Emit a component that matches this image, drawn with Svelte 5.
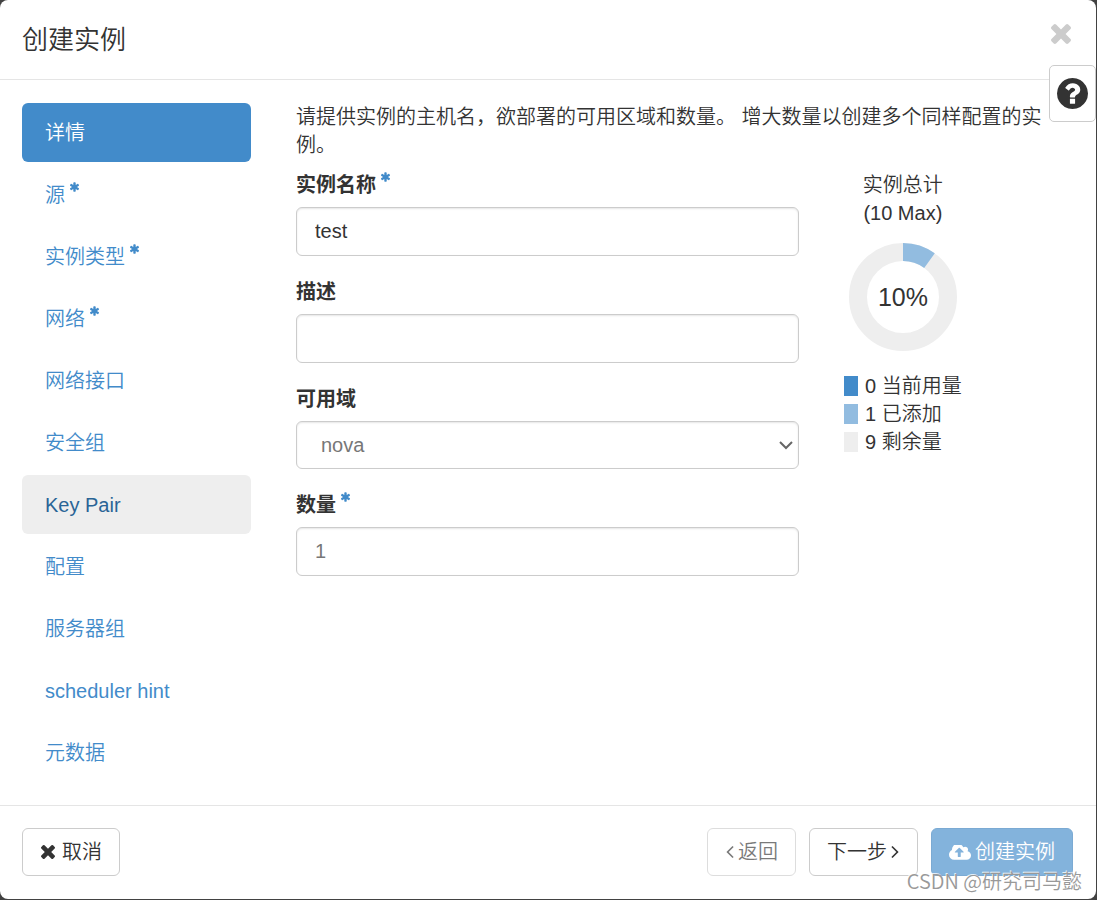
<script>
  const steps = [
    { label: '详情', state: 'active' },
    { label: '源', required: true },
    { label: '实例类型', required: true },
    { label: '网络', required: true },
    { label: '网络接口' },
    { label: '安全组' },
    { label: 'Key Pair', state: 'hover' },
    { label: '配置' },
    { label: '服务器组' },
    { label: 'scheduler hint' },
    { label: '元数据' }
  ];

  const legend = [
    { count: 0, label: '当前用量', kind: 'used' },
    { count: 1, label: '已添加', kind: 'added' },
    { count: 9, label: '剩余量', kind: 'left' }
  ];

  let name = $state('test');
  let description = $state('');
  let zone = $state('nova');
  let quantity = $state(1);

  const ring = 2 * Math.PI * 45;
  const timesPath =
    'M1490 1322q0 40-28 68l-136 136q-28 28-68 28t-68-28l-294-294-294 294q-28 28-68 28t-68-28l-136-136q-28-28-28-68t28-68l294-294-294-294q-28-28-28-68t28-68l136-136q28-28 68-28t68 28l294 294 294-294q28-28 68-28t68 28l136 136q28 28 28 68t-28 68l-294 294 294 294q28 28 28 68z';
</script>

{#snippet star()}
  <svg class="star" viewBox="180 128 1432 1536" aria-hidden="true">
    <path d="M1546 1050q46 26 59.5 77.5t-12.5 97.5l-64 110q-26 46-77.5 59.5t-97.5-12.5l-266-153v307q0 52-38 90t-90 38h-128q-52 0-90-38t-38-90v-307l-266 153q-46 26-97.5 12.5t-77.5-59.5l-64-110q-26-46-12.5-97.5t59.5-77.5l266-154-266-154q-46-26-59.5-77.5t12.5-97.5l64-110q26-46 77.5-59.5t97.5 12.5l266 153v-307q0-52 38-90t90-38h128q52 0 90 38t38 90v307l266-153q46-26 97.5-12.5t77.5 59.5l64 110q26 46 12.5 97.5t-59.5 77.5l-266 154z" />
  </svg>
{/snippet}

{#snippet times()}
  <svg class="times" viewBox="302 366 1188 1188" aria-hidden="true"><path d={timesPath} /></svg>
{/snippet}

<div class="modal" role="dialog" aria-labelledby="modal-title">
  <header>
    <h1 id="modal-title">创建实例</h1>
    <button class="close" type="button" aria-label="关闭">{@render times()}</button>
  </header>

  <button class="help" type="button" aria-label="帮助">
    <svg viewBox="128 128 1536 1536" aria-hidden="true">
      <path d="M1024 1376v-192q0-14-9-23t-23-9h-192q-14 0-23 9t-9 23v192q0 14 9 23t23 9h192q14 0 23-9t9-23zm256-672q0-88-55.5-163t-138.5-116-170-41q-243 0-371 213-15 24 8 42l132 100q7 6 19 6 16 0 25-12 53-68 86-92 34-24 86-24 48 0 85.5 26t37.5 59q0 38-20 61t-68 45q-63 28-115.5 86.5t-52.5 125.5v36q0 14 9 23t23 9h192q14 0 23-9t9-23q0-19 21.5-49.5t54.5-49.5q32-18 49-28.5t46-35 44.5-48 28-60.5 12.5-81zm384 192q0 209-103 385.5t-279.5 279.5-385.5 103-385.5-103-279.5-279.5-103-385.5 103-385.5 279.5-279.5 385.5-103 385.5 103 279.5 279.5 103 385.5z" />
    </svg>
  </button>

  <div class="body">
    <nav>
      {#each steps as step}
        <a href="#step" class={step.state}>
          <span>{step.label}</span>{#if step.required}{@render star()}{/if}
        </a>
      {/each}
    </nav>

    <main>
      <p>请提供实例的主机名，欲部署的可用区域和数量。 增大数量以创建多个同样配置的实例。</p>
      <div class="columns">
        <form id="launch">
          <div class="field">
            <label for="name">实例名称{@render star()}</label>
            <input id="name" type="text" bind:value={name} />
          </div>
          <div class="field">
            <label for="description">描述</label>
            <input id="description" type="text" bind:value={description} />
          </div>
          <div class="field">
            <label for="zone">可用域</label>
            <select id="zone" bind:value={zone}>
              <option value="nova">nova</option>
            </select>
          </div>
          <div class="field">
            <label for="quantity">数量{@render star()}</label>
            <input id="quantity" class="muted" type="number" min="1" bind:value={quantity} />
          </div>
        </form>

        <section class="quota">
          <div class="caption">实例总计<br />(10 Max)</div>
          <svg class="donut" viewBox="0 0 108 108" role="img" aria-label="10%">
            <circle class="track" cx="54" cy="54" r="45" />
            <circle
              class="slice"
              cx="54"
              cy="54"
              r="45"
              stroke-dasharray="{ring * 0.1} {ring}"
              transform="rotate(-90 54 54)"
            />
            <text x="54" y="63" text-anchor="middle">10%</text>
          </svg>
          <ul>
            {#each legend as row}
              <li><i class={row.kind}></i><span>{row.count} {row.label}</span></li>
            {/each}
          </ul>
        </section>
      </div>
    </main>
  </div>

  <footer>
    <button class="btn cancel" type="button">{@render times()}取消</button>
    <button class="btn" type="button" disabled>
      <svg class="angle" viewBox="589 460 640 1000" aria-hidden="true">
        <path d="M1203 544q0 13-10 23l-393 393 393 393q10 10 10 23t-10 23l-50 50q-10 10-23 10t-23-10l-466-466q-10-10-10-23t10-23l466-466q10-10 23-10t23 10l50 50q10 10 10 23z" />
      </svg>返回
    </button>
    <button class="btn" type="button">
      下一步<svg class="angle" viewBox="560 460 640 1000" aria-hidden="true">
        <path d="M1171 960q0 13-10 23l-466 466q-10 10-23 10t-23-10l-50-50q-10-10-10-23t10-23l393-393-393-393q-10-10-10-23t10-23l50-50q10-10 23-10t23 10l466 466q10 10 10 23z" />
      </svg>
    </button>
    <button class="btn primary" type="submit" form="launch" disabled>
      <svg class="cloud" viewBox="-64 256 1920 1280" aria-hidden="true">
        <path d="M1216 864q0-14-9-23l-352-352q-9-9-23-9t-23 9l-351 351q-10 12-10 24 0 14 9 23t23 9h224v352q0 13 9.5 22.5t22.5 9.5h192q13 0 22.5-9.5t9.5-22.5v-352h224q13 0 22.5-9.5t9.5-22.5zm640 288q0 159-112.5 271.5t-271.5 112.5h-1088q-185 0-316.5-131.5t-131.5-316.5q0-130 70-240t188-165q-2-30-2-43 0-212 150-362t362-150q156 0 285.5 87t188.5 231q71-62 166-62 106 0 181 75t75 181q0 76-41 138 130 31 213.5 135.5t83.5 238.5z" />
      </svg>创建实例
    </button>
  </footer>
  <div class="mark">CSDN @研究司马懿</div>
</div>

<style>
  :global(body) {
    margin: 0;
    background: #424242;
  }
  .modal,
  .modal :global(*) {
    box-sizing: border-box;
  }
  .modal {
    position: relative;
    margin: 0 1px 1px 0;
    background: #fff;
    border-radius: 8px;
    color: #333;
    font: 350 20px/28px 'Liberation Sans', 'Noto Sans CJK SC', sans-serif;
  }
  button,
  input,
  select {
    font: inherit;
    color: inherit;
  }
  svg {
    fill: currentColor;
    flex: none;
  }
  header {
    display: flex;
    justify-content: space-between;
    align-items: flex-start;
    padding: 22px 25px 21px 22px;
    border-bottom: 1px solid #e5e5e5;
  }
  h1 {
    margin: 0;
    font-size: 26px;
    font-weight: inherit;
    line-height: 36px;
  }
  .close {
    display: flex;
    margin: 2px 0 0;
    padding: 0;
    border: 0;
    background: none;
    color: #ccc;
  }
  .close .times {
    width: 20px;
    height: 20px;
  }
  .help {
    position: absolute;
    top: 65px;
    right: 0;
    display: flex;
    padding: 12px 7px;
    background: #fff;
    border: 1px solid #ccc;
    border-radius: 5px;
  }
  .help svg {
    width: 31px;
    height: 31px;
  }
  .body {
    display: grid;
    grid-template-columns: 229fr 778fr;
    gap: 45px;
    padding: 23px 22px;
  }
  nav {
    display: flex;
    flex-direction: column;
    gap: 3px;
  }
  nav a {
    display: flex;
    align-items: center;
    height: 59px;
    padding: 0 23px;
    border-radius: 6px;
    color: #428bca;
    text-decoration: none;
  }
  nav a.active {
    background: #428bca;
    color: #fff;
  }
  nav a.hover {
    background: #eee;
    color: #2a6496;
  }
  .star {
    width: 9px;
    height: 10px;
    margin: 0 0 16px 5px;
    color: #428bca;
  }
  p {
    margin: 0 22px 12px 0;
  }
  .columns {
    display: grid;
    grid-template-columns: 503fr 230fr;
    gap: 45px;
  }
  form {
    display: flex;
    flex-direction: column;
    gap: 22px;
  }
  .field {
    display: flex;
    flex-direction: column;
    gap: 8px;
  }
  label {
    display: flex;
    align-items: center;
    font-weight: 700;
  }
  input,
  select {
    width: 100%;
    height: 49px;
    margin: 0;
    padding: 0 18px;
    background: #fff;
    border: 1px solid #ccc;
    border-radius: 6px;
    box-shadow: inset 0 1px 2px rgba(0, 0, 0, 0.1);
    appearance: none;
  }
  input[type='number'] {
    appearance: textfield;
  }
  .muted,
  select {
    color: #777;
  }
  select {
    height: 48px;
    padding: 0 24px;
    background: #fff
      url("data:image/svg+xml,%3Csvg xmlns='http://www.w3.org/2000/svg' width='14' height='9' fill='none' stroke='%23666' stroke-width='2'%3E%3Cpath d='M1 1l6 6 6-6'/%3E%3C/svg%3E")
      no-repeat right 5px center;
  }
  .quota {
    display: flex;
    flex-direction: column;
    align-items: center;
    justify-self: start;
  }
  .caption {
    text-align: center;
  }
  .donut {
    width: 108px;
    height: 108px;
    margin: 16px 0 21px;
  }
  .donut circle {
    fill: none;
    stroke-width: 18;
  }
  .donut .track {
    stroke: #eee;
  }
  .donut .slice {
    stroke: #92bce0;
  }
  .donut text {
    font-size: 25px;
  }
  ul {
    margin: 0;
    padding: 0;
    list-style: none;
  }
  li {
    display: flex;
    align-items: center;
    gap: 7px;
  }
  i {
    width: 14px;
    height: 20px;
  }
  .used {
    background: #428bca;
  }
  .added {
    background: #92bce0;
  }
  .left {
    background: #eee;
  }
  footer {
    display: flex;
    gap: 13px;
    padding: 22px 23px 23px 22px;
    border-top: 1px solid #e5e5e5;
  }
  .btn {
    display: flex;
    align-items: center;
    gap: 3px;
    height: 48px;
    padding: 0 17px;
    background: #fff;
    border: 1px solid #ccc;
    border-radius: 6px;
  }
  .btn:disabled {
    opacity: 0.65;
  }
  .cancel {
    gap: 6px;
    margin-right: auto;
  }
  .cancel .times {
    width: 16px;
    height: 14px;
  }
  .primary {
    gap: 4px;
    background: #428bca;
    border-color: #357ebd;
    color: #fff;
  }
  .angle {
    width: 10px;
    height: 12px;
  }
  .cloud {
    width: 22px;
    height: 15px;
  }
  .mark {
    position: absolute;
    right: 14px;
    bottom: 4px;
    color: #999;
    font-family: 'Noto Sans CJK SC', sans-serif;
    text-shadow: -1px -1px 0 rgba(255, 255, 255, 0.8);
    pointer-events: none;
  }
</style>
